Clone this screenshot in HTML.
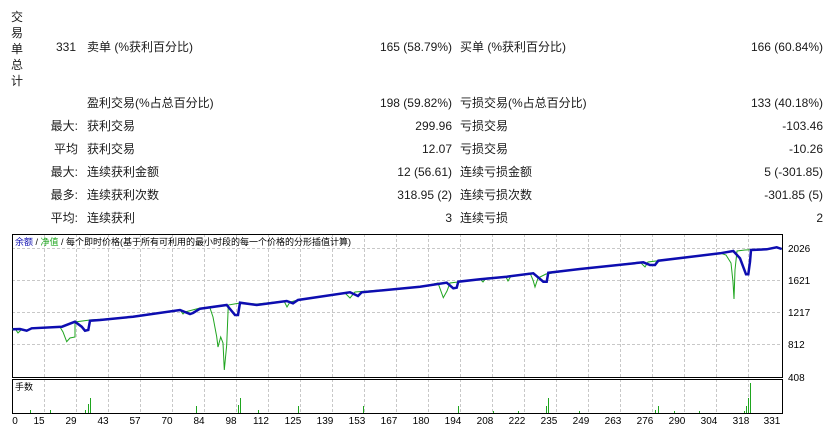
<!DOCTYPE html>
<html><head><meta charset="utf-8"><style>
body{margin:0;width:839px;height:431px;background:#fff;position:relative;overflow:hidden;font-family:"Liberation Sans","Noto Sans CJK SC",sans-serif;font-size:12px;color:#1a1a1a}
.t{position:absolute;white-space:nowrap;line-height:14px}
.r{text-align:right}
</style></head><body>
<div class="t" style="left:11px;top:9px;line-height:16px;width:14px">交<br>易<br>单<br>总<br>计</div>
<div class="t r" style="left:30px;top:40px;width:46px">331</div>
<div class="t" style="left:87px;top:40px">卖单 (%获利百分比)</div>
<div class="t r" style="left:300px;top:40px;width:152px">165 (58.79%)</div>
<div class="t" style="left:460px;top:40px">买单 (%获利百分比)</div>
<div class="t r" style="left:660px;top:40px;width:163px">166 (60.84%)</div>

<div class="t" style="left:87px;top:96px">盈利交易(%占总百分比)</div>
<div class="t r" style="left:300px;top:96px;width:152px">198 (59.82%)</div>
<div class="t" style="left:460px;top:96px">亏损交易(%占总百分比)</div>
<div class="t r" style="left:660px;top:96px;width:163px">133 (40.18%)</div>

<div class="t r" style="left:20px;top:119px;width:58px">最大:</div>
<div class="t" style="left:87px;top:119px">获利交易</div>
<div class="t r" style="left:300px;top:119px;width:152px">299.96</div>
<div class="t" style="left:460px;top:119px">亏损交易</div>
<div class="t r" style="left:660px;top:119px;width:163px">-103.46</div>

<div class="t r" style="left:20px;top:142px;width:58px">平均</div>
<div class="t" style="left:87px;top:142px">获利交易</div>
<div class="t r" style="left:300px;top:142px;width:152px">12.07</div>
<div class="t" style="left:460px;top:142px">亏损交易</div>
<div class="t r" style="left:660px;top:142px;width:163px">-10.26</div>

<div class="t r" style="left:20px;top:165px;width:58px">最大:</div>
<div class="t" style="left:87px;top:165px">连续获利金额</div>
<div class="t r" style="left:300px;top:165px;width:152px">12 (56.61)</div>
<div class="t" style="left:460px;top:165px">连续亏损金额</div>
<div class="t r" style="left:660px;top:165px;width:163px">5 (-301.85)</div>

<div class="t r" style="left:20px;top:188px;width:58px">最多:</div>
<div class="t" style="left:87px;top:188px">连续获利次数</div>
<div class="t r" style="left:300px;top:188px;width:152px">318.95 (2)</div>
<div class="t" style="left:460px;top:188px">连续亏损次数</div>
<div class="t r" style="left:660px;top:188px;width:163px">-301.85 (5)</div>

<div class="t r" style="left:20px;top:211px;width:58px">平均:</div>
<div class="t" style="left:87px;top:211px">连续获利</div>
<div class="t r" style="left:300px;top:211px;width:152px">3</div>
<div class="t" style="left:460px;top:211px">连续亏损</div>
<div class="t r" style="left:660px;top:211px;width:163px">2</div>

<svg style="position:absolute;left:0;top:0" width="839" height="431" font-family="Liberation Sans, Noto Sans CJK SC, sans-serif" font-size="10">
<g stroke="#c8c8c8" stroke-dasharray="3,2" stroke-width="1">
<line x1="12" y1="248.5" x2="783" y2="248.5"/><line x1="12" y1="280.5" x2="783" y2="280.5"/><line x1="12" y1="312.5" x2="783" y2="312.5"/><line x1="12" y1="344.5" x2="783" y2="344.5"/>
<path d="M44.5 234V413M76.5 234V413M108.5 234V413M140.5 234V413M172.5 234V413M204.5 234V413M236.5 234V413M268.5 234V413M300.5 234V413M332.5 234V413M364.5 234V413M396.5 234V413M428.5 234V413M460.5 234V413M492.5 234V413M524.5 234V413M556.5 234V413M588.5 234V413M620.5 234V413M652.5 234V413M684.5 234V413M716.5 234V413M748.5 234V413"/>
</g>
<rect x="12.5" y="234.5" width="770" height="143" fill="none" stroke="#000"/>
<rect x="12.5" y="379.5" width="770" height="34" fill="none" stroke="#000"/>
<polyline fill="none" stroke="#1fa51f" stroke-width="1" points="12,329 16,330 18,333 21,330 27,330 33,328 60,327 63,332 66.7,341.7 70,338 75,337 75,322 90,320 133,317 180,310 183,314 185,312 200,308 210,308 213,317 216.7,336.7 218,347 220.7,337 223,343 224.3,370 226.7,345 228.3,305 240,303 257,304 284,301 287,307 290,302 298,300 345,293 350,298 355,292 420,287 438,283 443.3,297.7 447,291 450,283 458,282 480,279 483,282 486,278 506,277 508,281 511,276 530,273 533,280 535,287 538,278 546,274 580,269 640,262 645,267 648,262 720,253 726,255 731,263 733,282 734,299 735,270 737,251 745,250 770,249 777,247 782,249"/>
<polyline fill="none" stroke="#0d0db0" stroke-width="2.5" points="12.7,329.3 20,329 26.7,330.7 31.7,328.3 62,326.7 75,321.7 81.7,326.7 85,330.7 88.3,330 90,320.7 100,320 133,316.7 180,310 190,314 193,313 200,308.7 226.7,305 235,315 238,315 240,302.7 256.7,305 286.7,301 293,303.3 298,300 350,292.3 358,296 361.7,292.3 420,286.7 446.7,282.7 453.3,288.3 456.7,287.7 458.3,281.7 480,279.3 506.7,276.7 533.3,273.3 543.3,281.7 546.7,281.7 548.3,272.7 580,269 643.3,262.3 650,265 655,265 658.3,260.7 720,253.3 733.3,251 740,258.3 746,274.3 748.3,274.3 750,261.7 751,250 766.7,249.3 776.7,247.3 781.7,249"/>
<g stroke="#1fa51f" stroke-width="1">
<path d="M30.5 413V410M50.5 413V410M85.5 413V410M88.5 413V404M90.5 413V398M196.5 413V406M238.5 413V405M240.5 413V398M258.5 413V410M298.5 413V406M363.5 413V406M458.5 413V406M493.5 413V411M518.5 413V411M546.5 413V406M548.5 413V398M579.5 413V411M655.5 413V410M658.5 413V406M674.5 413V411M699.5 413V411M744.5 413V411M746.5 413V406M748.5 413V398M750.5 413V383"/>
</g>
<text x="15" y="245" font-size="9"><tspan fill="#0d0db0">余额</tspan><tspan fill="#000"> / </tspan><tspan fill="#1fa51f">净值</tspan><tspan fill="#000"> / 每个即时价格(基于所有可利用的最小时段的每一个价格的分形插值计算)</tspan></text>
<text x="15" y="390" font-size="9" fill="#000">手数</text>
<g fill="#000" font-size="10">
<text x="788" y="252">2026</text><text x="788" y="284">1621</text><text x="788" y="316">1217</text><text x="788" y="348">812</text><text x="788" y="381">408</text>
</g>
<g fill="#000" font-size="10" text-anchor="middle">
<text x="15" y="424">0</text><text x="39" y="424">15</text><text x="71" y="424">29</text><text x="103" y="424">43</text><text x="135" y="424">57</text><text x="167" y="424">70</text><text x="199" y="424">84</text><text x="231" y="424">98</text><text x="261" y="424">112</text><text x="293" y="424">125</text><text x="325" y="424">139</text><text x="357" y="424">153</text><text x="389" y="424">167</text><text x="421" y="424">180</text><text x="453" y="424">194</text><text x="485" y="424">208</text><text x="517" y="424">222</text><text x="549" y="424">235</text><text x="581" y="424">249</text><text x="613" y="424">263</text><text x="645" y="424">276</text><text x="677" y="424">290</text><text x="709" y="424">304</text><text x="741" y="424">318</text><text x="772" y="424">331</text>
</g>
</svg>
</body></html>
